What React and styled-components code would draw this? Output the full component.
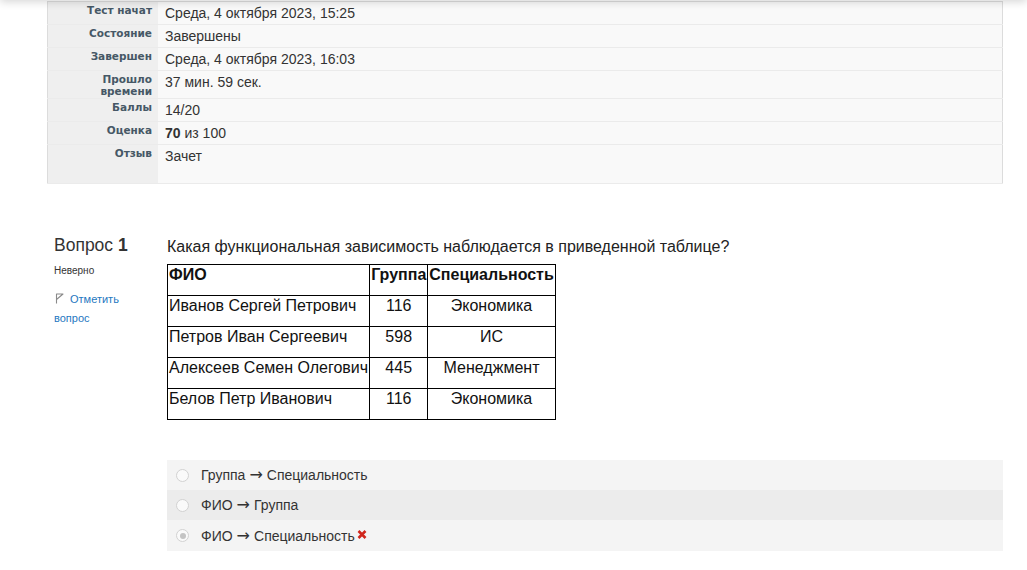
import React from 'react';
import styled, { createGlobalStyle } from 'styled-components';

const GlobalStyle = createGlobalStyle`
  body {
    margin: 0;
    background: #fff;
    font-family: 'Liberation Sans', Arial, sans-serif;
    color: #333;
  }
`;

const HeaderShadow = styled.div`
  position: fixed;
  top: -20px;
  left: 0;
  right: 0;
  height: 20px;
  box-shadow: 0 2px 9px rgba(0, 0, 0, 0.16);
  z-index: 5;
`;

const Page = styled.div`
  padding: 0 24px 20px 47px;
`;

const Summary = styled.table`
  width: 100%;
  margin-top: 1px;
  border-collapse: collapse;
  border: 1px solid #dcdcdc;
  background: #f9f9f9;
`;

const SummaryRow = styled.tr`
  border-bottom: 1px solid #ebebeb;
`;

const Label = styled.th`
  width: 98px;
  padding: 2px 6px 1px;
  background: #efefef;
  text-align: right;
  vertical-align: top;
  font-family: 'DejaVu Sans', Verdana, sans-serif;
  font-size: 10.5px;
  font-weight: bold;
  line-height: 12px;
  color: #465866;
`;

const Value = styled.td`
  padding: 2px 7px ${(p) => (p.$tall ? '18px' : '2px')};
  vertical-align: top;
  font-size: 14px;
  line-height: 18px;
  color: #333;
`;

const Question = styled.div`
  display: flex;
  margin-top: 51px;
`;

const Info = styled.div`
  width: 106px;
  padding-left: 7px;
  flex-shrink: 0;
`;

const QNo = styled.h3`
  margin: 0 0 8px;
  font-size: 17.5px;
  font-weight: normal;
  line-height: 21px;
  color: #333;
  b {
    font-weight: bold;
  }
`;

const State = styled.div`
  font-size: 10px;
  line-height: 14px;
  color: #333;
`;

const FlagLink = styled.a`
  display: block;
  width: 75px;
  margin-top: 12px;
  font-size: 11px;
  line-height: 19px;
  color: #1f78c1;
  text-decoration: none;
  svg {
    margin: 0 6px 0 1px;
    vertical-align: -1px;
  }
`;

const Content = styled.div`
  flex: 1;
  padding-left: 7px;
`;

const QText = styled.div`
  font-size: 16px;
  line-height: 24px;
  margin-bottom: 5px;
  color: #222;
`;

const DataTable = styled.table`
  border-collapse: collapse;
  font-size: 16px;
  line-height: 18px;
  color: #111;
`;

const Cell = styled.td`
  border: 1px solid #000;
  padding: 1px 1px 11px;
  vertical-align: top;
  white-space: nowrap;
  text-align: ${(p) => (p.$center ? 'center' : 'left')};
  font-weight: ${(p) => (p.$head ? 'bold' : 'normal')};
`;

const Answers = styled.div`
  margin-top: 40px;
`;

const Option = styled.div`
  display: flex;
  align-items: center;
  height: ${(p) => (p.$last ? '31px' : '30px')};
  padding-left: 9px;
  background: ${(p) => (p.$alt ? '#ececec' : '#f4f4f4')};
  font-size: 14px;
  color: #333;
`;

const OptionText = styled.span`
  line-height: 20px;
  white-space: nowrap;
`;

const Arrow = styled.span`
  font-family: 'DejaVu Sans', sans-serif;
  font-size: 16px;
  line-height: 14px;
  margin: 0 4px;
`;

const Radio = styled.span`
  position: relative;
  width: 11px;
  height: 11px;
  border: 1px solid #d2d2d2;
  border-radius: 50%;
  background: #fafafa;
  margin-right: 12px;
  flex-shrink: 0;
  &::after {
    content: '';
    display: ${(p) => (p.$checked ? 'block' : 'none')};
    position: absolute;
    left: 2.5px;
    top: 2.5px;
    width: 6px;
    height: 6px;
    border-radius: 50%;
    background: #c4c4c4;
  }
`;

const Cross = styled.svg`
  margin-left: 2px;
  vertical-align: 2px;
`;

const summary = [
  ['Тест начат', 'Среда, 4 октября 2023, 15:25'],
  ['Состояние', 'Завершены'],
  ['Завершен', 'Среда, 4 октября 2023, 16:03'],
  [['Прошло', 'времени'], '37 мин. 59 сек.'],
  ['Баллы', '14/20'],
  ['Оценка', <><b>70</b> из 100</>],
];

const rows = [
  ['Иванов Сергей Петрович', '116', 'Экономика'],
  ['Петров Иван Сергеевич', '598', 'ИС'],
  ['Алексеев Семен Олегович', '445', 'Менеджмент'],
  ['Белов Петр Иванович', '116', 'Экономика'],
];

const options = [
  { from: 'Группа', to: 'Специальность' },
  { from: 'ФИО', to: 'Группа' },
  { from: 'ФИО', to: 'Специальность', checked: true, wrong: true },
];

const FlagIcon = () => (
  <svg width="9" height="11" viewBox="0 0 9 11" fill="none">
    <path d="M1.5 10.5V1H8L1.5 6.5" stroke="#8a8a8a" strokeWidth="1.1" strokeLinejoin="round" />
  </svg>
);

export default function App() {
  return (
    <>
      <GlobalStyle />
      <HeaderShadow />
      <Page>
        <Summary>
          <tbody>
            {summary.map(([label, value], i) => (
              <SummaryRow key={i}>
                <Label>
                  {Array.isArray(label) ? (
                    <>
                      {label[0]}
                      <br />
                      {label[1]}
                    </>
                  ) : (
                    label
                  )}
                </Label>
                <Value>{value}</Value>
              </SummaryRow>
            ))}
            <SummaryRow>
              <Label>Отзыв</Label>
              <Value $tall>Зачет</Value>
            </SummaryRow>
          </tbody>
        </Summary>

        <Question>
          <Info>
            <QNo>
              Вопрос <b>1</b>
            </QNo>
            <State>Неверно</State>
            <FlagLink href="#">
              <FlagIcon />
              Отметить вопрос
            </FlagLink>
          </Info>
          <Content>
            <QText>Какая функциональная зависимость наблюдается в приведенной таблице?</QText>
            <DataTable>
              <tbody>
                <tr>
                  <Cell $head>ФИО</Cell>
                  <Cell $head>Группа</Cell>
                  <Cell $head>Специальность</Cell>
                </tr>
                {rows.map((r, i) => (
                  <tr key={i}>
                    <Cell>{r[0]}</Cell>
                    <Cell $center>{r[1]}</Cell>
                    <Cell $center>{r[2]}</Cell>
                  </tr>
                ))}
              </tbody>
            </DataTable>
            <Answers>
              {options.map((o, i) => (
                <Option key={i} $alt={i === 1} $last={i === 2}>
                  <Radio $checked={o.checked} />
                  <OptionText>
                    {o.from}
                    <Arrow>→</Arrow>
                    {o.to}
                    {o.wrong && (
                      <Cross width="10" height="9" viewBox="0 0 10 9">
                        <path d="M1.5 1L8.5 8M8.5 1L1.5 8" stroke="#d0261c" strokeWidth="2.6" />
                      </Cross>
                    )}
                  </OptionText>
                </Option>
              ))}
            </Answers>
          </Content>
        </Question>
      </Page>
    </>
  );
}
